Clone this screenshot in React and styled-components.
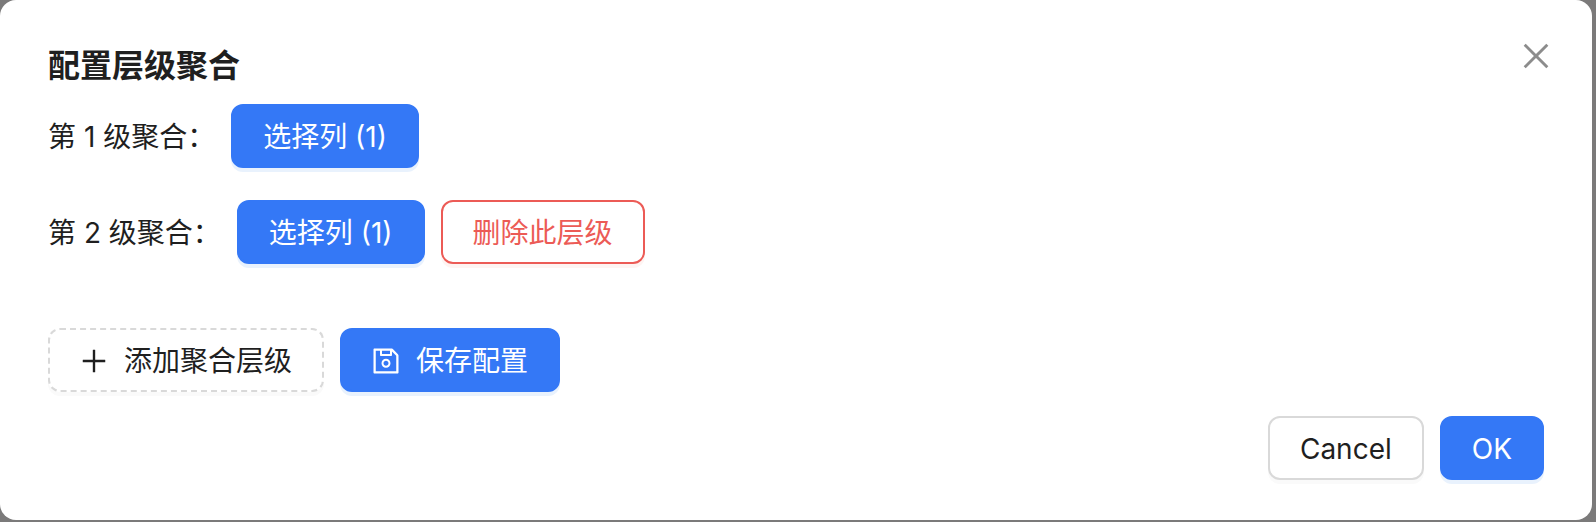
import React from "react";
import styled, { createGlobalStyle, css } from "styled-components";
import { AiOutlineClose, AiOutlinePlus, AiOutlineSave } from "react-icons/ai";

const GlobalStyle = createGlobalStyle`
  *, *::before, *::after {
    box-sizing: border-box;
  }
  body {
    margin: 0;
    background: #7b7a7a;
    color: #1f1f1f;
    font-family: Inter, "Noto Sans CJK SC", sans-serif;
    font-size: 28px;
    line-height: 44px;
  }
`;

const Dialog = styled.section`
  position: relative;
  margin: 0 4px 2px 0;
  padding: 40px 48px;
  border-radius: 16px;
  background: #fff;
`;

const Title = styled.h1`
  margin: 0 0 12px;
  font-size: 32px;
  font-weight: 700;
  line-height: 52px;
`;

const CloseButton = styled.button`
  position: absolute;
  top: 24px;
  right: 24px;
  display: grid;
  place-items: center;
  width: 64px;
  height: 64px;
  padding: 0;
  border: 0;
  background: none;
  color: #8c8c8c;
  font-size: 32px;
  cursor: pointer;
`;

const Level = styled.div`
  display: flex;
  align-items: center;
  margin-bottom: 32px;
`;

const LevelLabel = styled.span`
  margin-right: 16px;
  padding-top: 2px;
`;

const variants = {
  primary: css`
    border-color: #3478f6;
    background: #3478f6;
    color: #fff;
    box-shadow: 0 4px 0 #e9f2fd;
  `,
  danger: css`
    border-color: #ec5b56;
    color: #ec5b56;
    box-shadow: 0 4px 0 #fef4f2;
  `,
  dashed: css`
    border-color: #d9d9d9;
    border-style: dashed;
    box-shadow: 0 4px 0 #fafafa;
  `,
  plain: css`
    border-color: #d9d9d9;
    box-shadow: 0 4px 0 #fafafa;
  `,
};

const Button = styled.button`
  display: inline-flex;
  align-items: center;
  gap: 16px;
  height: 64px;
  padding: 2px 30px 0;
  border: 2px solid;
  border-radius: 12px;
  background: #fff;
  color: #1f1f1f;
  font: inherit;
  white-space: nowrap;
  cursor: pointer;
  ${({ $variant }) => variants[$variant]}
`;

const ButtonGroup = styled.div`
  display: flex;
  gap: 16px;
`;

const Actions = styled(ButtonGroup)`
  margin-top: 64px;
`;

const Footer = styled(ButtonGroup)`
  justify-content: flex-end;
  margin-top: 24px;
`;

// Trims the icons' built-in margin so the glyph fills its box.
const ICON_VIEW_BOX = "64 64 896 896";

const levels = [
  { id: 1, columns: 1, removable: false },
  { id: 2, columns: 1, removable: true },
];

export default function App() {
  return (
    <>
      <GlobalStyle />
      <Dialog role="dialog" aria-labelledby="dialog-title">
        <Title id="dialog-title">配置层级聚合</Title>
        <CloseButton type="button" aria-label="Close">
          <AiOutlineClose viewBox={ICON_VIEW_BOX} />
        </CloseButton>
        {levels.map((level) => (
          <Level key={level.id}>
            <LevelLabel>第 {level.id} 级聚合：</LevelLabel>
            <ButtonGroup>
              <Button type="button" $variant="primary">
                选择列 ({level.columns})
              </Button>
              {level.removable && (
                <Button type="button" $variant="danger">
                  删除此层级
                </Button>
              )}
            </ButtonGroup>
          </Level>
        ))}
        <Actions>
          <Button type="button" $variant="dashed">
            <AiOutlinePlus viewBox={ICON_VIEW_BOX} />
            添加聚合层级
          </Button>
          <Button type="button" $variant="primary">
            <AiOutlineSave viewBox={ICON_VIEW_BOX} />
            保存配置
          </Button>
        </Actions>
        <Footer>
          <Button type="button" $variant="plain">
            Cancel
          </Button>
          <Button type="button" $variant="primary">
            OK
          </Button>
        </Footer>
      </Dialog>
    </>
  );
}
